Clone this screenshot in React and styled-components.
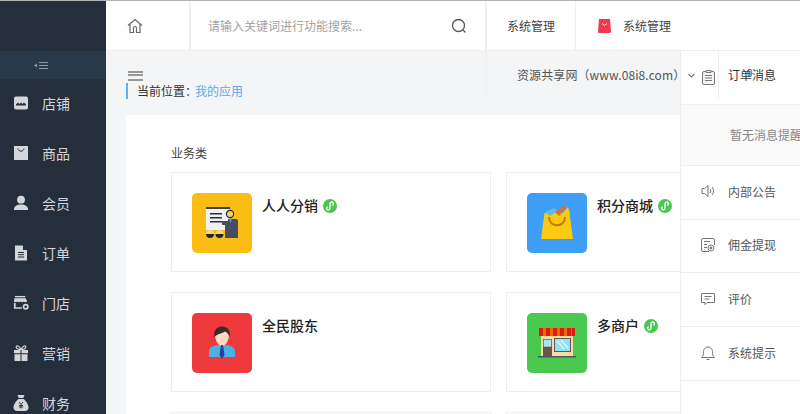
import React from "react";
import styled, { createGlobalStyle } from "styled-components";

const Global = createGlobalStyle`
  html, body { margin: 0; padding: 0; height: 100%; overflow: hidden; }
  body { font-family: "Noto Sans CJK SC", "Open Sans", sans-serif; background: #fff; }
  #root { height: 100%; }
  * { box-sizing: border-box; }
`;

const Page = styled.div`
  position: relative;
  width: 800px;
  height: 414px;
  overflow: hidden;
  border-top: 1px solid #b4b4b4;
  display: flex;
`;

const Sidebar = styled.aside`
  flex: 0 0 106px;
  background: #252f3b;
  display: flex;
  flex-direction: column;
`;
const SideLogo = styled.div`flex: 0 0 50px;`;
const Collapse = styled.div`
  flex: 0 0 28px;
  background: #2a394a;
  display: flex;
  align-items: center;
  padding-left: 34px;
`;
const SideItem = styled.div`
  flex: 0 0 50px;
  display: flex;
  align-items: center;
  padding: 0 0 2px 13px;
  gap: 13px;
  color: #d4d6d9;
  font-size: 14px;
  svg { flex: 0 0 16px; }
`;

const Main = styled.div`
  flex: 1;
  min-width: 0;
  display: flex;
  flex-direction: column;
  background: #f4f5f7;
`;
const Header = styled.header`
  flex: 0 0 50px;
  background: #fff;
  display: flex;
  border-bottom: 1px solid #eee;
`;
const HomeCell = styled.div`
  flex: 0 0 85px;
  display: flex;
  align-items: center;
  padding-left: 21px;
  border-right: 2px solid #f0f0f0;
`;
const SearchCell = styled.div`
  flex: 0 0 296px;
  display: flex;
  align-items: center;
  justify-content: space-between;
  padding: 0 18px 0 17px;
  border-right: 2px solid #f0f0f0;
  color: #a3a3a3;
  font-size: 12px;
`;
const NavCell = styled.div`
  flex: 0 0 ${p => p.$w}px;
  display: flex;
  align-items: center;
  padding-left: ${p => p.$pad}px;
  gap: 12px;
  font-size: 12px;
  color: #444;
  border-right: ${p => (p.$edge ? "1px solid #eee" : "none")};
`;

const SubBar = styled.div`
  flex: 0 0 64px;
  display: flex;
  justify-content: space-between;
`;
const Crumbs = styled.div`
  padding: 20px 0 0 20px;
  display: flex;
  flex-direction: column;
  align-items: flex-start;
`;
const Burger = styled.div`
  width: 15px;
  height: 10px;
  margin: 0 0 2px 2px;
  border-top: 2px solid #999;
  border-bottom: 2px solid #999;
  position: relative;
  &::after {
    content: "";
    position: absolute;
    left: 0;
    right: 0;
    top: 1px;
    height: 2px;
    background: #999;
  }
`;
const Crumb = styled.div`
  border-left: 2px solid #5cb0f5;
  padding-left: 9px;
  height: 16px;
  line-height: 16px;
  font-size: 12px;
  color: #333;
  span { color: #5ba8ee; margin-left: -2px; }
`;
const UserArea = styled.div`
  width: 314px;
  height: 48px;
  border-left: 1px solid #eceef0;
  padding: 14px 0 0 30px;
  font-size: 12px;
  letter-spacing: 0.1px;
  color: #555;
  line-height: 20px;
  white-space: nowrap;
`;

const Content = styled.div`
  flex: 1;
  margin-left: 20px;
  background: #fff;
  padding: 30px 0 0 45px;
`;
const GroupTitle = styled.div`
  font-size: 12px;
  line-height: 16px;
  color: #444;
  margin-bottom: 11px;
`;
const Grid = styled.div`
  display: grid;
  grid-template-columns: repeat(2, 320px);
  grid-auto-rows: 100px;
  gap: 20px 15px;
`;
const Card = styled.div`
  border: 1px solid #eee;
  padding: 20px;
  display: flex;
  gap: 10px;
  background: #fff;
`;
const Tile = styled.div`
  flex: 0 0 60px;
  height: 60px;
  border-radius: 5px;
  background: ${p => p.$bg};
  display: flex;
  align-items: center;
  justify-content: center;
`;
const CardTitle = styled.div`
  display: flex;
  align-items: center;
  gap: 5px;
  height: 23px;
  font-size: 14px;
  font-weight: 500;
  color: #222;
  svg { margin-top: 3px; }
`;

const Panel = styled.div`
  position: absolute;
  top: 50px;
  right: 0;
  width: 120px;
  bottom: 0;
  background: #fff;
  border-left: 1px solid #eee;
  color: #555;
  font-size: 12px;
`;
const PanelHead = styled.div`
  height: 54px;
  display: flex;
  position: relative;
  border-bottom: 1px solid #eee;
`;
const HeadIconCell = styled.div`
  flex: 0 0 38px;
  height: 48px;
  border-right: 1px solid #eee;
  padding: 19px 0 0 7px;
  display: flex;
  align-items: flex-start;
  gap: 7px;
`;
const ChevronIcon = styled.svg`
  margin-top: 3px;
`;
const HeadLabel = styled.div`
  padding: 14px 0 0 9px;
  line-height: 20px;
  color: #333;
  font-size: 12px;
  white-space: nowrap;
`;
const HeadCount = styled.span`
  position: absolute;
  left: 66px;
  top: 16px;
  font-size: 10px;
  line-height: 12px;
  color: #556;
`;
const Empty = styled.div`
  height: 61px;
  background: #f9f9f9;
  border-bottom: 1px solid #eee;
  padding: 20px 0 0 49px;
  line-height: 20px;
  color: #888;
  white-space: nowrap;
  overflow: hidden;
`;
const PanelRow = styled.div`
  height: 53.67px;
  display: flex;
  align-items: center;
  gap: 13px;
  padding: 0 0 2px 20px;
  border-bottom: 1px solid #eee;
`;

const icon = { width: 16, height: 16, viewBox: "0 0 16 16", fill: "#d4d6d9" };
const SideIcons = {
  shop: (
    <svg {...icon}>
      <path d="M3 1.500h10a2 2 0 0 1 2 2v9a2 2 0 0 1-2 2H3a2 2 0 0 1-2-2v-9a2 2 0 0 1 2-2z" />
      <path d="M3 9.500l2-2 1.500 1.500L8 7.500l1.500 1.500L11 7.500l2 2v1H3z" fill="#252f3b" />
    </svg>
  ),
  goods: (
    <svg {...icon}>
      <path d="M2 1h12.500a.7.7 0 0 1 .5.5v12.800a.7.7 0 0 1-.5.7H1.500a.7.7 0 0 1-.5-.7V1.500A.7.7 0 0 1 2 1z" />
      <path d="M5 3.500c.3 3.500 5.700 3.500 6 0" fill="none" stroke="#252f3b" strokeWidth="1" />
    </svg>
  ),
  member: (
    <svg {...icon}>
      <circle cx="8" cy="4.700" r="3.900" />
      <path d="M1 14.500c0-3.500 3-5 7-5s7 1.500 7 5v.5H1z" />
    </svg>
  ),
  order: (
    <svg {...icon}>
      <path d="M2 .5h7.500L14 5v10.500H2z" />
      <path d="M10 .5V5h4.500z" fill="#252f3b" />
      <path d="M5 7.500h6M5 9.700h6M5 12h6" stroke="#252f3b" strokeWidth="1" />
    </svg>
  ),
  store: (
    <svg width="17" height="16" viewBox="0 0 17 16" fill="#d4d6d9">
      <path d="M2 .5h11v1.500H2z" />
      <path d="M1.500 3h12l1.500 3.500c-1 1-2.500 1-3.500 0-1 1-2.500 1-3.500 0-1 1-2.500 1-3.500 0-1 1-2.500 1-3.500 0z" />
      <path d="M1 8h1.800v4.500H9.500V14H1z" />
      <circle cx="13.500" cy="12" r="2.300" fill="none" stroke="#d4d6d9" strokeWidth="1.800" />
    </svg>
  ),
  gift: (
    <svg {...icon}>
      <path d="M1 5h6.500v3.300H1zM8.500 5H15v3.300H8.500zM1.500 9.300h6V16h-6zM8.500 9.300h6V16h-6z" />
      <path d="M8 4.500C6 .5 3.500 0 3.200 2 3 4 6 4.500 8 4.500zM8 4.500c2-4 4.500-4.500 4.800-2.500C13 4 10 4.500 8 4.500z" fill="none" stroke="#d4d6d9" strokeWidth="1.200" />
    </svg>
  ),
  money: (
    <svg {...icon}>
      <path d="M4.500 0h7L10.300 3H5.700z" />
      <path d="M5.500 4h5C13 6 15.500 9.500 15.500 12.500c0 2-1.500 3.500-3.500 3.500H4c-2 0-3.500-1.500-3.500-3.500C.5 9.500 3 6 5.500 4z" />
      <path d="M6 7l2 2.500L10 7M8 9.500V13.500M6 10.500h4M6 12h4" fill="none" stroke="#252f3b" strokeWidth=".9" />
    </svg>
  ),
};

const menu = [
  ["shop", "店铺"],
  ["goods", "商品"],
  ["member", "会员"],
  ["order", "订单"],
  ["store", "门店"],
  ["gift", "营销"],
  ["money", "财务"],
];

const Link = () => (
  <svg width="14" height="14" viewBox="0 0 14 14">
    <circle cx="7" cy="7" r="7" fill="#4ac651" />
    <path d="M4 7.700a1.700 1.700 0 1 0 2.300 1.600V4.700a1.700 1.700 0 1 1 2.300 1.600" fill="none" stroke="#fff" strokeWidth="1.300" transform="translate(.7 0)" />
  </svg>
);

const Presenter = () => (
  <svg width="32" height="32" viewBox="0 0 32 32">
    <rect x="0" y="1" width="24" height="22" fill="#eef0f2" />
    <rect x="0" y="0" width="24" height="2" fill="#3a3f4d" />
    <path d="M4 6h12v1.500H4zM4 10h12v1.500H4zM4 14h12v1.500H4z" fill="#2b2e38" />
    <circle cx="24" cy="7" r="3.600" fill="#f5cf72" stroke="#2b2e38" strokeWidth="1.200" />
    <path d="M16 14h6v-2h8a2 2 0 0 1 2 2v17H19V18h-3z" fill="#474c5e" />
    <path d="M23 11.500l1.500 5 1.500-5z" fill="#3ea2e0" />
    <circle cx="4" cy="27" r="4" fill="#f3d57b" />
    <path d="M0 27a4 4 0 0 0 8 0z" fill="#23252e" />
    <circle cx="13.500" cy="27" r="4" fill="#f3d57b" />
    <path d="M9.500 27a4 4 0 0 0 8 0z" fill="#23252e" />
  </svg>
);
const Bag = () => (
  <svg width="32" height="34" viewBox="0 0 32 34">
    <path d="M3.500 7h25L32 33H0z" fill="#fdca12" />
    <path d="M4 6l9-4 4 3-8 5z" fill="#62b9e2" />
    <path d="M14 6l9-6 3 1-8 9z" fill="#e0702c" />
    <path d="M20 9l7-8 2 7z" fill="#fdca12" />
    <path d="M8 11c0 11 16 11 16 0" fill="none" stroke="#c27a12" strokeWidth="2" />
  </svg>
);
const Person = () => (
  <svg width="26" height="34" viewBox="0 0 26 34">
    <path d="M0 31v-6c0-3 3-5 8-6h10c5 1 8 3 8 6v6z" fill="#4cb0e4" />
    <path d="M6 8a7 7 0 0 1 14 0c0 6-3 12-7 12S6 14 6 8z" fill="#fbdcc4" />
    <path d="M5.500 11C4 4 9 0 13 .5c5 0 9 4 7.500 10.500-1-3-2.500-4.500-4.500-5.500-3 2-7 2-10.500 5.500z" fill="#3b2d2a" />
    <path d="M12 19h2l1.500 10-2.500 4-2.500-4z" fill="#2a3f9d" />
  </svg>
);
const Shop = () => (
  <svg width="38" height="30" viewBox="0 0 38 30">
    <rect x="3" y="6" width="32" height="22" fill="#fbdc9c" />
    <rect x="1" y="0" width="36" height="8" fill="#f0660b" />
    <path d="M1 0h4v8H1zM8 0h4v8H8zM15 0h4v8h-4zM22 0h4v8h-4zM29 0h4v8h-4zM34 0h3v8h-3z" fill="#d91c0e" />
    <rect x="5" y="11" width="9" height="17" fill="#6d5251" />
    <rect x="5.700" y="11.700" width="7.600" height="7" fill="#9fe7fb" />
    <rect x="16" y="10" width="17" height="14" fill="#6d5251" />
    <rect x="17" y="11" width="15" height="12" fill="#8ee1fb" />
    <path d="M19 13l7 8M23 12l7 8" stroke="#dff7fe" strokeWidth="1.400" />
    <rect x="0" y="28" width="38" height="1.500" fill="#4b5563" />
  </svg>
);

export default function App() {
  return (
    <Page>
      <Global />
      <Sidebar>
        <SideLogo />
        <Collapse>
          <svg width="14" height="7" viewBox="0 0 14 7">
            <path d="M5 .5h9M5 3.500h9M5 6.500h9" stroke="#8e99a5" strokeWidth="1" />
            <path d="M0 3.500L3 1.500v4z" fill="#8e99a5" />
          </svg>
        </Collapse>
        {menu.map(([k, label]) => (
          <SideItem key={label}>
            {SideIcons[k]}
            {label}
          </SideItem>
        ))}
      </Sidebar>
      <Main>
        <Header>
          <HomeCell>
            <svg width="16" height="16" viewBox="0 0 16 16" fill="none" stroke="#666" strokeWidth="1.200">
              <path d="M1 7.500L8 1.500l7 6M3 6v8.500h3.500V10a1.500 1.500 0 0 1 3 0v4.500H13V6" />
            </svg>
          </HomeCell>
          <SearchCell>
            请输入关键词进行功能搜索...
            <svg width="16" height="16" viewBox="0 0 16 16" fill="none" stroke="#555" strokeWidth="1.300">
              <circle cx="7.500" cy="7.500" r="6" />
              <path d="M12 12l2.500 2.500" />
            </svg>
          </SearchCell>
          <NavCell $w={89} $pad={20} $edge>系统管理</NavCell>
          <NavCell $w={224} $pad={22}>
            <svg width="13" height="14" viewBox="0 0 13 14">
              <path d="M1 0h11l1 12.500a1.500 1.500 0 0 1-1.500 1.500h-10A1.500 1.500 0 0 1 0 12.500z" fill="#ef3b50" />
              <path d="M4 4.500l2.500 2 2.500-2" fill="none" stroke="#fff" strokeWidth="1" />
            </svg>
            系统管理
          </NavCell>
        </Header>
        <SubBar>
          <Crumbs>
            <Burger />
            <Crumb>当前位置：<span>我的应用</span></Crumb>
          </Crumbs>
          <UserArea>资源共享网（www.08i8.com）</UserArea>
        </SubBar>
        <Content>
          <GroupTitle>业务类</GroupTitle>
          <Grid>
            <Card>
              <Tile $bg="#fbbc13"><Presenter /></Tile>
              <CardTitle>人人分销<Link /></CardTitle>
            </Card>
            <Card>
              <Tile $bg="#3f9ef6"><Bag /></Tile>
              <CardTitle>积分商城<Link /></CardTitle>
            </Card>
            <Card>
              <Tile $bg="#ee3a3d"><Person /></Tile>
              <CardTitle>全民股东</CardTitle>
            </Card>
            <Card>
              <Tile $bg="#4ac951"><Shop /></Tile>
              <CardTitle>多商户<Link /></CardTitle>
            </Card>
            <Card />
            <Card />
          </Grid>
        </Content>
      </Main>
      <Panel>
        <PanelHead>
          <HeadIconCell>
            <ChevronIcon width="7" height="5" viewBox="0 0 7 5" fill="none" stroke="#777" strokeWidth="1.200">
              <path d="M.5 1l3 3 3-3" />
            </ChevronIcon>
            <svg width="13" height="15" viewBox="0 0 13 15" fill="#f4f4f4" stroke="#777">
              <rect x=".5" y="1.500" width="12" height="13" rx="1.500" />
              <path d="M3 5.500h7M3 8h7M3 10.500h7M4 .5h5v2H4z" />
            </svg>
          </HeadIconCell>
          <HeadLabel>订单消息</HeadLabel>
          <HeadCount>0</HeadCount>
        </PanelHead>
        <Empty>暂无消息提醒</Empty>
        <PanelRow>
          <svg width="14" height="14" viewBox="0 0 14 14" fill="none" stroke="#777">
            <path d="M1 4.500h2.500L7 1.500v11l-3.500-3H1zM9 5a3 3 0 0 1 0 4M11 3a6 6 0 0 1 0 8" />
          </svg>
          内部公告
        </PanelRow>
        <PanelRow>
          <svg width="14" height="14" viewBox="0 0 14 14" fill="none" stroke="#777">
            <path d="M8 13.500H2A1.500 1.500 0 0 1 .5 12V2A1.500 1.500 0 0 1 2 .5h10A1.500 1.500 0 0 1 13.500 2v5" />
            <path d="M3 3.500h6M3 6.500h3M3 9.500h3" />
            <circle cx="10" cy="10" r="3" />
            <circle cx="10" cy="10" r="1" fill="#777" />
          </svg>
          佣金提现
        </PanelRow>
        <PanelRow>
          <svg width="14" height="14" viewBox="0 0 14 14" fill="none" stroke="#777">
            <path d="M.5 1.500h13v9H6l-2 2v-2H.5z" />
            <path d="M3.500 4.500h7M3.500 7h5" />
          </svg>
          评价
        </PanelRow>
        <PanelRow>
          <svg width="14" height="15" viewBox="0 0 14 15" fill="none" stroke="#777">
            <path d="M.5 12.500c1.800-1 2-3 2-6a4.500 4.500 0 0 1 9 0c0 3 .2 5 2 6zM5.500 14.500h3" />
          </svg>
          系统提示
        </PanelRow>
      </Panel>
    </Page>
  );
}
